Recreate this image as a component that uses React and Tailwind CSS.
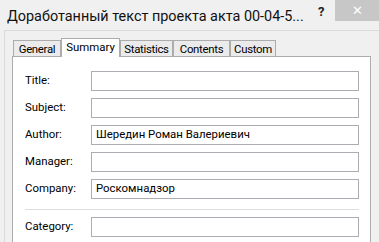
const fields = [
  { label: 'Title:', value: '' },
  { label: 'Subject:', value: '' },
  { label: 'Author:', value: 'Шередин Роман Валериевич' },
  { label: 'Manager:', value: '' },
  { label: 'Company:', value: 'Роскомнадзор' },
];

const tabs = [
  { name: 'General', w: 'w-[48px]' },
  { name: 'Summary', w: 'w-[59px]', active: true },
  { name: 'Statistics', w: 'w-[53px]' },
  { name: 'Contents', w: 'w-[57px]' },
  { name: 'Custom', w: 'w-[46px]' },
];

function Field({ label, value }) {
  return (
    <div className="flex items-center h-[20px]">
      <span className="w-[66px] text-[11.4px] text-black leading-none">{label}</span>
      <div className="w-[268px] h-[20px] bg-white border border-[#abadb3] flex items-center pl-[4px] text-[11.4px] text-black leading-none">
        {value}
      </div>
    </div>
  );
}

export default function App() {
  return (
    <div className="w-[379px] h-[242px] bg-[#f0f0f0] overflow-hidden flex flex-col font-['Roboto',sans-serif]">
      {/* Title bar */}
      <div className="h-[30px] flex items-start shrink-0">
        <div className="flex-1 min-w-0 pl-[7px] pt-[7px] text-[14.4px] leading-[20px] text-[#111] whitespace-nowrap overflow-hidden">
          Доработанный текст проекта акта 00-04-5...
        </div>
        <div className="w-[17px] pt-[2px] text-[13px] font-bold text-[#222]">?</div>
        <div className="w-[44px] h-[21px] bg-[#c7c7c7] flex items-center justify-center text-white text-[13px] leading-none">
          ✕
        </div>
      </div>

      {/* Dialog body */}
      <div className="flex-1 ml-[4px] border-l border-t border-[#dadada] pl-[7px] pt-[7px]">
        <div className="flex items-end ml-[1px] -mb-px relative z-10">
          {tabs.map((t) =>
            t.active ? (
              <div
                key={t.name}
                className={`${t.w} h-[19px] bg-white border border-b-0 border-[#acacac] text-[11.4px] leading-none text-black flex justify-center pt-[3px]`}
              >
                {t.name}
              </div>
            ) : (
              <div
                key={t.name}
                className={`${t.w} h-[17px] bg-[#ebebeb] border border-[#acacac] text-[11.4px] tracking-[-0.3px] leading-none text-black flex justify-center pt-[3px]`}
              >
                {t.name}
              </div>
            )
          )}
        </div>
        <div className="w-[359px] h-[200px] bg-white border border-[#acacac] pl-[12px] pt-[14px] flex flex-col">
          <div className="flex flex-col gap-[7px]">
            {fields.map((f) => (
              <Field key={f.label} {...f} />
            ))}
          </div>
          <div className="w-[334px] h-px bg-[#dcdcdc] mt-[10px] mb-[7px]" />
          <Field label="Category:" value="" />
        </div>
      </div>
    </div>
  );
}
